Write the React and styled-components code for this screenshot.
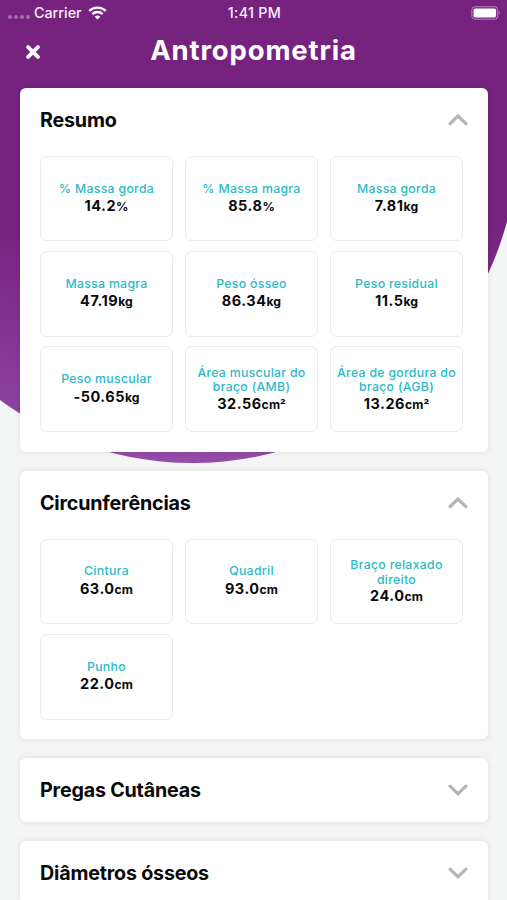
import React, { useState } from "react"
import styled, { createGlobalStyle } from "styled-components"

const GlobalStyle = createGlobalStyle`
  * {
    box-sizing: border-box;
  }
  body {
    margin: 0;
    background: #f4f6f5;
    overflow: hidden;
  }
`

const Screen = styled.div`
  position: relative;
  width: 507px;
  height: 900px;
  overflow: hidden;
  background: #f4f6f5;
  font-family: "Inter", "Liberation Sans", sans-serif;
`

const Bubble = styled.div`
  position: absolute;
  top: -200px;
  left: -133px;
  width: 651px;
  height: 663px;
  border-radius: 0 0 325.5px 325.5px;
  background: linear-gradient(#762380 0, #762380 430px, #954ba8 663px);
`

const Content = styled.div`
  position: relative;
  display: flex;
  flex-direction: column;
`

const StatusBar = styled.div`
  display: grid;
  grid-template-columns: 1fr auto 1fr;
  align-items: center;
  height: 26px;
  padding: 0 6px 0 8px;
  color: #f8eef9;
  font-size: 14.3px;
  font-weight: 500;
  line-height: 26px;
`

const Network = styled.div`
  display: flex;
  align-items: center;
`

const Signal = styled.div`
  display: flex;
  gap: 2px;
  margin: 8px 4px 0 0;
  opacity: 0.35;
  i {
    width: 4px;
    height: 4px;
    border-radius: 50%;
    background: #fff;
  }
`

const Carrier = styled.span`
  width: 49px;
  margin-right: 5px;
`

const Time = styled.span`
  letter-spacing: 0.3px;
`

const Battery = styled.svg`
  justify-self: end;
`

const TopBar = styled.header`
  display: grid;
  grid-template-columns: 14px 1fr 14px;
  align-items: center;
  height: 50px;
  padding: 0 26px;
  margin-bottom: 11.8px;
`

const CloseButton = styled.button`
  display: flex;
  margin-top: 2px;
  padding: 0;
  border: 0;
  background: none;
`

const PageTitle = styled.h1`
  margin: -2px 0 0;
  color: #fff;
  font-size: 27.5px;
  font-weight: 750;
  line-height: 48px;
  letter-spacing: 0.85px;
  text-align: center;
`

const Sections = styled.main`
  display: flex;
  flex-direction: column;
  gap: 19px;
  padding: 0 19px 0 20px;
`

const Card = styled.section`
  border-radius: 6px;
  background: #fff;
  box-shadow: 0 0 7px rgba(0, 0, 0, 0.1);
  padding-bottom: ${({ open }) => (open ? "19.5px" : "0")};
`

const CardHeader = styled.div`
  display: flex;
  align-items: center;
  justify-content: space-between;
  height: 64px;
  padding: 0 20px;
`

const CardTitle = styled.h2`
  margin: 0;
  color: #090909;
  font-size: 19.7px;
  font-weight: 650;
  line-height: 24px;
  letter-spacing: -0.2px;
`

const Grid = styled.div`
  display: grid;
  grid-template-columns: repeat(3, 133px);
  grid-auto-rows: 85.7px;
  gap: 9.6px 12px;
  padding: 4px 20px 0;
`

const Cell = styled.div`
  display: flex;
  flex-direction: column;
  align-items: center;
  justify-content: center;
  padding-top: 1.5px;
  border: 1px solid #ebebeb;
  border-radius: 7px;
  text-align: center;
`

const Label = styled.span`
  color: #2cbac8;
  font-size: 12.3px;
  font-weight: 450;
  line-height: 14.6px;
  letter-spacing: 0.3px;
  white-space: pre-line;
`

const Value = styled.strong`
  color: #0b0b0b;
  font-size: 14.5px;
  font-weight: 700;
  line-height: ${({ tight }) => (tight ? "18px" : "20px")};
  letter-spacing: 0.5px;
  small {
    font-size: 12.2px;
    font-weight: 700;
    letter-spacing: 0.1px;
  }
`

const sections = [
  {
    title: "Resumo",
    open: true,
    items: [
      ["% Massa gorda", "14.2", "%"],
      ["% Massa magra", "85.8", "%"],
      ["Massa gorda", "7.81", "kg"],
      ["Massa magra", "47.19", "kg"],
      ["Peso ósseo", "86.34", "kg"],
      ["Peso residual", "11.5", "kg"],
      ["Peso muscular", "-50.65", "kg"],
      ["Área muscular do\nbraço (AMB)", "32.56", "cm²"],
      ["Área de gordura do\nbraço (AGB)", "13.26", "cm²"],
    ],
  },
  {
    title: "Circunferências",
    open: true,
    items: [
      ["Cintura", "63.0", "cm"],
      ["Quadril", "93.0", "cm"],
      ["Braço relaxado\ndireito", "24.0", "cm"],
      ["Punho", "22.0", "cm"],
    ],
  },
  { title: "Pregas Cutâneas", items: [] },
  { title: "Diâmetros ósseos", items: [] },
]

const Chevron = ({ up }) => (
  <svg width="20" height="14" viewBox="0 0 20 14" fill="none">
    <path
      d={up ? "M2.1 10.6 L10 3 L17.9 10.6" : "M2.1 3.2 L10 10.8 L17.9 3.2"}
      stroke="#b2b5b7"
      strokeWidth="3.2"
      strokeLinecap="round"
    />
  </svg>
)

const Section = ({ title, items, open: initial }) => {
  const [open, setOpen] = useState(Boolean(initial))

  return (
    <Card open={open}>
      <CardHeader onClick={() => setOpen(!open)}>
        <CardTitle>{title}</CardTitle>
        <Chevron up={open} />
      </CardHeader>
      {open && (
        <Grid>
          {items.map(([label, value, unit]) => (
            <Cell key={label}>
              <Label>{label}</Label>
              <Value tight={label.includes("\n")}>
                {value}
                <small>{unit}</small>
              </Value>
            </Cell>
          ))}
        </Grid>
      )}
    </Card>
  )
}

const App = () => (
  <>
    <GlobalStyle />
    <Screen>
      <Bubble />
      <Content>
        <StatusBar>
          <Network>
            <Signal>
              <i />
              <i />
              <i />
              <i />
            </Signal>
            <Carrier>Carrier</Carrier>
            <svg width="19" height="14" viewBox="0 0 19 14" fill="none" stroke="#fff" strokeWidth="2.3">
              <path d="M1.2 4.9 C5.8 0.4 13.2 0.4 17.8 4.9" />
              <path d="M4.3 8.1 C7.2 5.3 11.8 5.3 14.7 8.1" />
              <path d="M6.7 10.7 Q9.5 8.2 12.3 10.7 L9.5 13.6 Z" fill="#fff" stroke="none" />
            </svg>
          </Network>
          <Time>1:41 PM</Time>
          <Battery width="30" height="14" viewBox="0 0 30 14">
            <rect x="0.8" y="0.8" width="26" height="12.4" rx="3.2" fill="none" stroke="#fff" strokeOpacity="0.45" />
            <rect x="2.5" y="2.5" width="22.6" height="9" rx="1.8" fill="#fff" />
            <path d="M28.2 5 Q30 7 28.2 9 Z" fill="#fff" fillOpacity="0.5" />
          </Battery>
        </StatusBar>
        <TopBar>
          <CloseButton aria-label="Fechar">
            <svg width="14" height="14" viewBox="0 0 14 14" stroke="#fff" strokeWidth="3.8" strokeLinecap="round">
              <path d="M2.1 2.1 L11.9 11.9 M11.9 2.1 L2.1 11.9" />
            </svg>
          </CloseButton>
          <PageTitle>Antropometria</PageTitle>
        </TopBar>
        <Sections>
          {sections.map((section) => (
            <Section key={section.title} {...section} />
          ))}
        </Sections>
      </Content>
    </Screen>
  </>
)

export default App
